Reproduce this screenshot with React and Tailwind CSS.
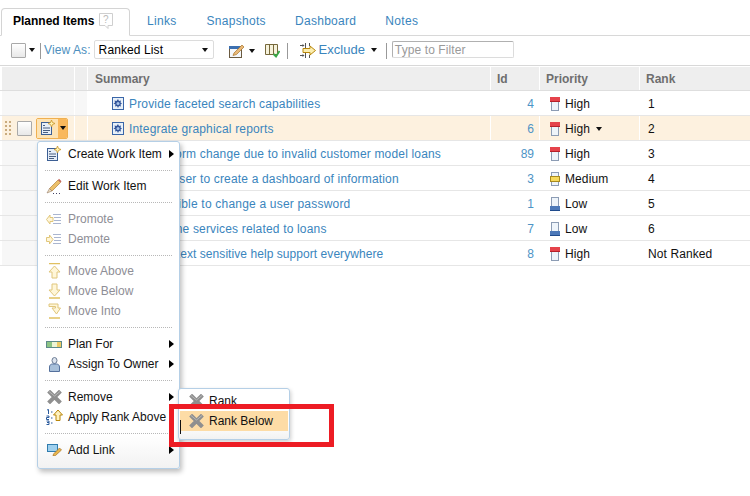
import React from "react";

const Caret = ({ className = "" }) => (
  <svg width="6" height="4" viewBox="0 0 6 4" className={"shrink-0 " + className}><path d="M0 0h6L3 4z" fill="#111" /></svg>
);
const Arrow = () => (
  <svg width="5" height="8" viewBox="0 0 5 8" className="shrink-0"><path d="M0 0l5 4-5 4z" fill="#000" /></svg>
);

const Story = () => (
  <svg width="12" height="13" viewBox="0 0 12 13" className="shrink-0">
    <rect x="0.500" y="0.500" width="11" height="12" fill="#e8f0f8" stroke="#3a66a8" />
    <path d="M6 2l1 2 2-.5-.5 2 1.500 1-1.500 1 .5 2-2-.5-1 2-1-2-2 .5.5-2L1.500 6.500 3 5.500l-.5-2 2 .5z" fill="#33559a" />
    <circle cx="6" cy="6.500" r="1.500" fill="#a8c4e8" />
  </svg>
);

const Prio = ({ level }) => {
  const top = level === "High";
  const mid = level === "Medium";
  const low = level === "Low";
  return (
    <svg width="10" height="14" viewBox="0 0 10 14" className="shrink-0">
      <rect x="1.500" y="0.500" width="7" height="13" fill="#eef4fa" stroke="#8c9cb4" />
      {top && <rect x="0" y="0" width="10" height="5" fill="#e5434b" />}
      {top && <rect x="0" y="4" width="10" height="1" fill="#b5202a" />}
      {mid && <rect x="0.500" y="4.500" width="9" height="5" fill="#f6d95a" stroke="#a88a20" />}
      {low && <rect x="0" y="9" width="10" height="5" fill="#4c78b8" />}
      {low && <rect x="0" y="13" width="10" height="1" fill="#1f4a8c" />}
    </svg>
  );
};

const CreateIcon = () => (
  <svg width="16" height="16" viewBox="0 0 16 16" className="shrink-0">
    <rect x="1.500" y="2.500" width="10" height="12" fill="#e6eef8" stroke="#3c5f94" />
    <path d="M3 5.500h2M3 8h7M3 10.500h7M3 12.500h5" stroke="#4a5f80" />
    <path d="M11.500 0l1 2.500 2.500 1-2.500 1-1 2.500-1-2.500-2.500-1 2.500-1z" fill="#fff3b0" stroke="#c9962a" strokeWidth="0.800" />
  </svg>
);
const Pencil = () => (
  <svg width="16" height="16" viewBox="0 0 16 16" className="shrink-0">
    <path d="M3.500 10.500L12 2l2.500 2.500L6 13z" fill="#ecc06a" stroke="#a8742a" strokeWidth="0.600" />
    <path d="M12 2l2.500 2.500 1-1.200L13 .8z" fill="#c46a60" />
    <path d="M3.500 10.500L1 15l5-2z" fill="#eadcc0" stroke="#8a6a50" strokeWidth="0.500" />
    <path d="M7 15.500h1M10 15.500h1M13 15.500h1" stroke="#446" />
  </svg>
);
const Promote = ({ flip }) => (
  <svg width="16" height="11" viewBox="0 0 16 11" className="shrink-0">
    <path d="M7 .5h8M8 3.500h7M8 6.500h7M7 9.500h8" stroke="#aab6d0" />
    {flip
      ? <path d="M.5 3.500h3V1l3.500 4.500L3.500 10V7.500h-3z" fill="#fff6d8" stroke="#e0c67c" />
      : <path d="M7 3.500H4V1L.5 5.500 4 10V7.500h3z" fill="#fff6d8" stroke="#e0c67c" />}
  </svg>
);
const MoveAbove = () => (
  <svg width="13" height="16" viewBox="0 0 13 16" className="shrink-0">
    <path d="M1 .5h11" stroke="#e0c060" strokeWidth="1.500" />
    <path d="M6.500 3L12 9H9v6H4V9H1z" fill="#fff6d8" stroke="#e0c67c" />
  </svg>
);
const MoveBelow = () => (
  <svg width="13" height="16" viewBox="0 0 13 16" className="shrink-0">
    <path d="M1 15h11" stroke="#e0c060" strokeWidth="1.500" />
    <path d="M6.500 13L12 7H9V1H4v6H1z" fill="#fff6d8" stroke="#e0c67c" />
  </svg>
);
const MoveInto = () => (
  <svg width="13" height="16" viewBox="0 0 13 16" className="shrink-0">
    <path d="M1 15h11" stroke="#e0c060" strokeWidth="1.500" />
    <path d="M1 1h9v4h2.500L8.500 11 4 5h3.500V3.500H1z" fill="#fff6d8" stroke="#e0c67c" />
  </svg>
);
const PlanIcon = () => (
  <svg width="16" height="7" viewBox="0 0 16 7" className="shrink-0">
    <rect x="0.500" y="0.500" width="15" height="6" fill="#e8e8b0" stroke="#5d8a8a" />
    <rect x="1" y="1" width="5" height="5" fill="#8cc484" />
    <rect x="6" y="1" width="5" height="5" fill="#eef4d4" />
    <rect x="11" y="1" width="4" height="5" fill="#eccb66" />
  </svg>
);
const Owner = () => (
  <svg width="11" height="15" viewBox="0 0 11 15" className="shrink-0">
    <ellipse cx="5.500" cy="3.500" rx="2.500" ry="3" fill="#dde4ee" stroke="#6c7c94" />
    <path d="M.5 14.500V10c0-2 1.500-3 3-3h4c1.500 0 3 1 3 3v4.500z" fill="#a8c0da" stroke="#54709c" />
  </svg>
);
const XIcon = () => (
  <svg width="15" height="14" viewBox="0 0 15 14" className="shrink-0">
    <path d="M3 2.500l9 9M12 2.500l-9 9" stroke="#8f8f8f" strokeWidth="4" strokeLinecap="square" />
    <path d="M2 1.500l5.500 4.500M13 1.500L7.500 6" stroke="#b8b8b8" strokeWidth="1" />
  </svg>
);
const ApplyRank = () => (
  <svg width="17" height="16" viewBox="0 0 17 16" className="shrink-0">
    <path d="M1 1l1.500-.5V5M.5 7H3v1.500H.5V10.500H3M.5 12H3v1.500H1M3 13.500V15.500H.5M5 3h1.500M5 9h1.500M5 14h1.500" fill="none" stroke="#2a5a9c" />
    <path d="M12 1l4.500 5H14v5.500H10V6H7.500z" fill="#fff2c0" stroke="#b8860b" />
  </svg>
);
const LinkIcon = () => (
  <svg width="15" height="12" viewBox="0 0 15 12" className="shrink-0">
    <rect x="0.500" y="0.500" width="10" height="7" fill="#9fd0ee" stroke="#2f7cae" />
    <path d="M6.500 10l6-6 2 2-6 5.500-2.500.5z" fill="#e8b64c" stroke="#a8742a" strokeWidth="0.700" />
  </svg>
);
const Chooser = () => (
  <svg width="16" height="14" viewBox="0 0 16 14" className="shrink-0">
    <rect x="0.500" y="2.500" width="12" height="11" fill="#f4f7fb" stroke="#6a5a40" />
    <rect x="0" y="2" width="13" height="3" fill="#3c6fb0" />
    <path d="M5 9l8-8 2 2-7.500 7.500-3.500 1z" fill="#e8b878" stroke="#a8742a" strokeWidth="0.700" />
  </svg>
);
const Columns = () => (
  <svg width="15" height="15" viewBox="0 0 15 15" className="shrink-0">
    <path d="M.5 1.500h12M.5 1.500v10h12v-10M4.500 1.500v10M8.500 1.500v10" fill="#f6f2dc" stroke="#77693c" />
    <path d="M8.500 11l2.500 2.500L14.500 8" fill="none" stroke="#38a848" strokeWidth="1.800" />
  </svg>
);
const ExcludeIcon = () => (
  <svg width="16" height="17" viewBox="0 0 16 17" className="shrink-0">
    <path d="M5.500 1v5M5.500 11v5M0 3.500h4M0 13.500h4" stroke="#555" />
    <path d="M2.500 2l2 1.500-2 1.500zM2.500 12l2 1.500-2 1.500z" fill="#555" />
    <path d="M3 6.500h7V4l5.500 4.500L10 13v-2.500H3z" fill="#fbeeb0" stroke="#b8860b" />
    <path d="M9.500 1v3M9.500 13v3" stroke="#555" />
  </svg>
);
const Grip = () => (
  <div className="grid grid-cols-2 gap-x-[2px] gap-y-[2px] w-[6px] shrink-0">
    {[0, 1, 2, 3, 4, 5, 6, 7].map((i) => <span key={i} className="block w-[2px] h-[2px] bg-[#c9ab7e]" />)}
  </div>
);

const Box = ({ className = "" }) => (
  <div className={"w-[15px] h-[15px] border border-[#a9a9a9] bg-gradient-to-b from-white to-[#e8e8e8] rounded-[1px] " + className} />
);

const rows = [
  ["Provide faceted search capabilities", "4", "High", "1", "tracking-[0.17px]"],
  ["Integrate graphical reports", "6", "High", "2", "tracking-[0.17px]"],
  ["Handle form change due to invalid customer model loans", "89", "High", "3", "tracking-[0.17px]"],
  ["Allow a user to create a dashboard of information", "3", "Medium", "4", "tracking-[0.17px]"],
  ["It is possible to change a user password", "1", "Low", "5", "tracking-[0.2px]"],
  ["Access the services related to loans", "7", "Low", "6", "tracking-[0.17px]"],
  ["Give context sensitive help support everywhere", "8", "High", "Not Ranked", "tracking-[0.06px]"],
];

const Row = ({ r, i }) => {
  const active = i === 1;
  const cell = active ? "bg-[#fdf1df]" : "bg-white";
  const left = active ? "bg-[#fdf1df]" : "bg-[#f7f7f7]";
  return (
    <div className="flex h-[25px] border-b border-[#e6e6e6] pl-[2px]">
      <div className={"w-[73px] shrink-0 flex items-center pl-[3px] border-r border-white " + left}>
        {active && (
          <>
            <Grip />
            <Box className="ml-[6px]" />
            <div className="ml-[4px] flex h-[21px] w-[32px] rounded-[2px] border border-[#f0b050] overflow-hidden">
              <div className="w-[21px] flex items-center justify-center bg-[#fde3b4]"><CreateIcon /></div>
              <div className="flex-1 flex items-center justify-center bg-[#f9b85c]"><Caret /></div>
            </div>
          </>
        )}
      </div>
      <div className={"w-[13px] shrink-0 border-r border-white " + left} />
      <div className={"w-[403px] shrink-0 flex items-center pt-px pl-[24px] gap-[5px] border-r border-white text-[#3a85bd] " + r[4] + " " + cell}>
        <Story /><span className="whitespace-nowrap">{r[0]}</span>
      </div>
      <div className={"w-[49px] shrink-0 flex items-center pt-px justify-end pr-[5px] border-r border-white text-[#4d94c6] " + cell}>{r[1]}</div>
      <div className={"w-[100px] shrink-0 flex items-center pt-px pl-[10px] gap-[5px] border-r border-white text-[#111] tracking-[0.1px] " + cell}>
        <Prio level={r[2]} /><span>{r[2]}</span>{active && <Caret className="ml-[1px]" />}
      </div>
      <div className={"flex-1 flex items-center pt-px pl-[8px] text-[#111] tracking-[0.1px] " + cell}>{r[3]}</div>
    </div>
  );
};

const Sep = ({ tight }) => (
  <div className={"mx-[7px] mt-[6px] border-t border-dotted border-[#b8b8b8] " + (tight ? "mb-[5px]" : "mb-[6px]")} />
);

const Item = ({ icon, label, arrow, disabled }) => (
  <div className={"h-[20px] flex items-center pr-[5px] " + (disabled ? "text-[#8e8e96]" : "text-[#111]")}>
    <div className="w-[30px] shrink-0 flex justify-center pl-[2px]">{icon}</div>
    <span className="whitespace-nowrap flex-1">{label}</span>
    {arrow && <Arrow />}
  </div>
);

export default function App() {
  return (
    <div className="relative w-[750px] h-[496px] bg-white overflow-hidden text-[12px] font-['Liberation_Sans',Arial,sans-serif]">
      {/* Tabs */}
      <div className="h-[36px] flex items-end border-b border-[#d8d8d8]">
        <div className="ml-[1px] w-[129px] h-[28px] -mb-px flex items-center gap-[5px] pl-[11px] pb-[2px] rounded-t-[4px] border border-b-white border-[#d4d4d4] bg-white">
          <span className="font-bold text-black">Planned Items</span>
          <svg width="14" height="16" viewBox="0 0 14 16"><path d="M.5.500h13v12H9v3l-3-3H.5z" fill="#fff" stroke="#cfcfcf" /><text x="4" y="10" fontSize="10" fill="#bbb" fontFamily="Liberation Sans">?</text></svg>
        </div>
        <div className="h-[27px] flex items-center pb-[2px] text-[#3a85bd] tracking-[0.3px]">
          <span className="ml-[17px]">Links</span>
          <span className="ml-[30px]">Snapshots</span>
          <span className="ml-[29px]">Dashboard</span>
          <span className="ml-[29px]">Notes</span>
        </div>
      </div>
      {/* Toolbar */}
      <div className="h-[30px] flex items-center border-b border-[#d8d8d8] pl-[11px] pb-[2px]">
        <Box className="mt-[2px]" />
        <Caret className="ml-[3px]" />
        <div className="ml-[5px] w-px h-[16px] bg-[#999] mt-[2px]" />
        <span className="ml-[3px] text-[#4d8fbe] tracking-[0.1px]">View As:</span>
        <div className="ml-[3px] w-[120px] h-[19px] flex items-center justify-between pl-[4px] pr-[5px] border border-[#dcdcdc] rounded-[2px] text-black tracking-[0.1px]">
          <span>Ranked List</span><Caret />
        </div>
        <div className="ml-[15px] mt-[2px]"><Chooser /></div>
        <Caret className="ml-[4px] mt-[2px]" />
        <div className="ml-[10px] mt-[2px]"><Columns /></div>
        <div className="ml-[7px] w-px h-[16px] bg-[#999] mt-[2px]" />
        <div className="ml-[12px] mt-[2px]"><ExcludeIcon /></div>
        <span className="ml-[3px] text-[13px] text-[#3a85bd]">Exclude</span>
        <Caret className="ml-[6px]" />
        <div className="ml-[9px] w-px h-[16px] bg-[#999] mt-[2px]" />
        <div className="ml-[5px] w-[122px] h-[17px] flex items-center pl-[2px] border border-[#dcdcdc] border-t-[#b0b0b0] border-l-[#b0b0b0] rounded-[2px] text-[#9a9a9a] tracking-[0.1px]">Type to Filter</div>
      </div>
      {/* Header */}
      <div className="flex h-[25px] border-b border-[#dedede] pl-[2px] pt-px font-bold text-[#6e6e6e]">
        <div className="w-[73px] shrink-0 bg-[#eeeeee] border-r border-white" />
        <div className="w-[13px] shrink-0 bg-[#eeeeee] border-r border-white" />
        <div className="w-[403px] shrink-0 bg-[#eeeeee] border-r border-white flex items-center pl-[7px]">Summary</div>
        <div className="w-[49px] shrink-0 bg-[#eeeeee] border-r border-white flex items-center pl-[6px]">Id</div>
        <div className="w-[100px] shrink-0 bg-[#eeeeee] border-r border-white flex items-center pl-[6px]">Priority</div>
        <div className="flex-1 bg-[#eeeeee] flex items-center pl-[6px]">Rank</div>
      </div>
      {rows.map((r, i) => <Row key={i} r={r} i={i} />)}

      {/* Context menu */}
      <div className="absolute left-[37px] top-[141px] w-[143px] h-[328px] rounded-[3px] border border-[#b5cfe6] bg-gradient-to-b from-white from-90% to-[#f2f2f2] shadow-[2px_3px_5px_rgba(0,0,0,0.25)] pt-[2px]">
        <Item icon={<CreateIcon />} label="Create Work Item" arrow />
        <Sep tight />
        <Item icon={<Pencil />} label="Edit Work Item" />
        <Sep />
        <Item icon={<Promote />} label="Promote" disabled />
        <Item icon={<Promote flip />} label="Demote" disabled />
        <Sep tight />
        <Item icon={<MoveAbove />} label="Move Above" disabled />
        <Item icon={<MoveBelow />} label="Move Below" disabled />
        <Item icon={<MoveInto />} label="Move Into" disabled />
        <Sep />
        <Item icon={<PlanIcon />} label="Plan For" arrow />
        <Item icon={<Owner />} label="Assign To Owner" arrow />
        <Sep />
        <Item icon={<XIcon />} label="Remove" arrow />
        <Item icon={<ApplyRank />} label="Apply Rank Above" />
        <Sep />
        <Item icon={<LinkIcon />} label="Add Link" arrow />
      </div>

      {/* Submenu */}
      <div className="absolute left-[178px] top-[388px] w-[112px] h-[52px] rounded-[3px] border border-[#b5cfe6] bg-gradient-to-b from-white from-70% to-[#f2f2f2] shadow-[1px_2px_4px_rgba(0,0,0,0.2)] pt-[2px] pl-[1px] text-[#111]">
        <div className="h-[19px] flex items-center pl-[9px] gap-[5px] mr-px"><XIcon /><span>Rank</span></div>
        <div className="h-[20px] mt-px flex items-center pl-[9px] gap-[5px] mr-px bg-[#fddca6]"><XIcon /><span>Rank Below</span></div>
        <div className="absolute left-[1px] top-[31px] w-px h-[14px] bg-[#111]" />
      </div>

      {/* Red annotation */}
      <div className="absolute left-[169px] top-[404px] w-[165px] h-[43px] border-[5px] border-[#ed1c24]" />
    </div>
  );
}
